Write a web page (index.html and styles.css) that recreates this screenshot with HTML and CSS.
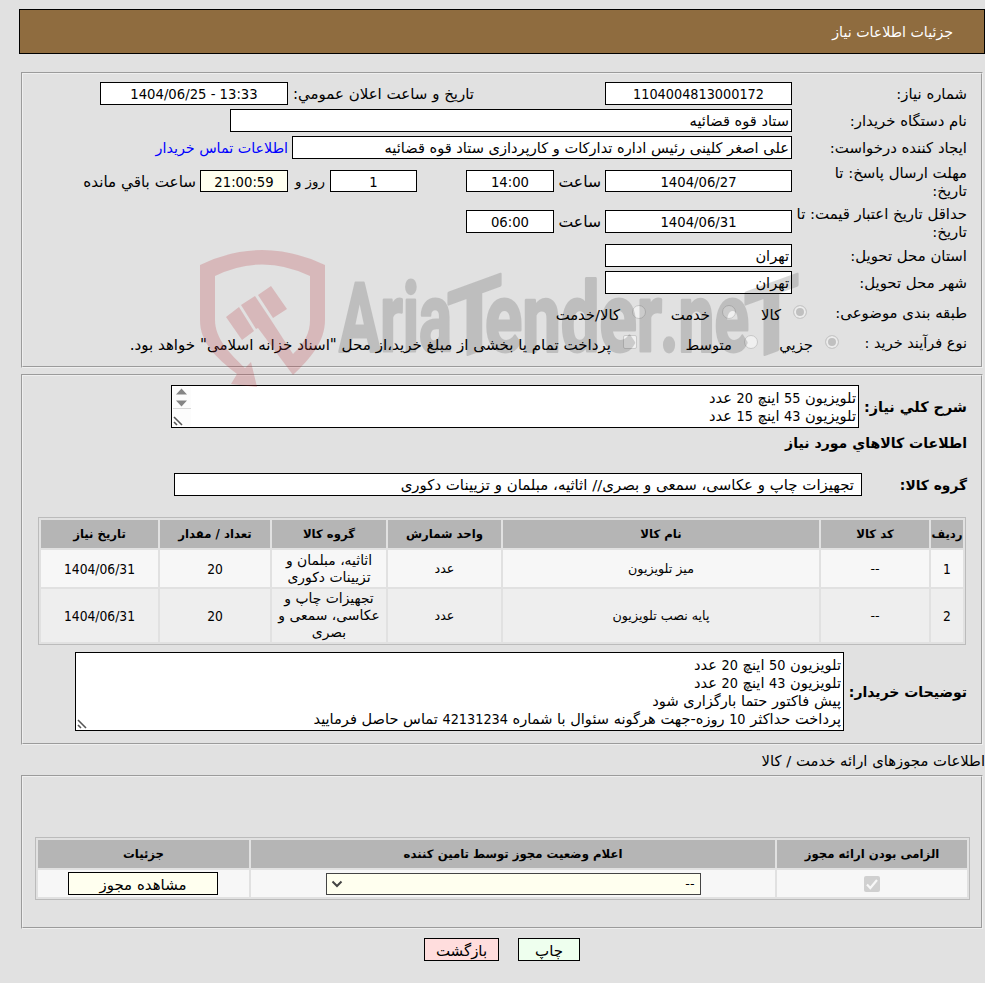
FILE: index.html
```html
<!DOCTYPE html>
<html lang="fa" dir="rtl">
<head>
<meta charset="UTF-8">
<title>جزئیات اطلاعات نیاز</title>
<link rel="stylesheet" href="styles.css">
</head>
<body>
    <header class="page-title">جزئیات اطلاعات نیاز</header>

    <section class="panel panel-info">
        <div class="row">
            <span class="label">شماره نیاز:</span>
            <span class="box w187 center need-number">1104004813000172</span>
            <span class="note note-date">تاریخ و ساعت اعلان عمومي:</span>
            <span class="box w188 center" dir="ltr">1404/06/25 - 13:33</span>
        </div>
        <div class="row">
            <span class="label">نام دستگاه خریدار:</span>
            <span class="box w562">ستاد قوه قضائیه</span>
        </div>
        <div class="row">
            <span class="label">ایجاد کننده درخواست:</span>
            <span class="box w500">علی اصغر کلینی رئیس اداره تدارکات و کارپردازی ستاد قوه قضائیه</span>
            <a class="contact">اطلاعات تماس خریدار</a>
        </div>
        <div class="row row-reply">
            <span class="label">مهلت ارسال پاسخ: تا<br>تاریخ:</span>
            <span class="box w187 center">1404/06/27</span>
            <span class="note note-hour">ساعت</span>
            <span class="box w88 center">14:00</span>
            <span class="box w87 center days">1</span>
            <span class="note note-day">روز و</span>
            <span class="box w88 center timer">21:00:59</span>
            <span class="note note-left">ساعت باقي مانده</span>
        </div>
        <div class="row row-valid">
            <span class="label">حداقل تاریخ اعتبار قیمت: تا<br>تاریخ:</span>
            <span class="box w187 center">1404/06/31</span>
            <span class="note note-hour">ساعت</span>
            <span class="box w88 center">06:00</span>
        </div>
        <div class="row">
            <span class="label">استان محل تحویل:</span>
            <span class="box w187">تهران</span>
        </div>
        <div class="row">
            <span class="label">شهر محل تحویل:</span>
            <span class="box w187">تهران</span>
        </div>
        <div class="row row-options">
            <span class="label label-options">طبقه بندی موضوعی:</span>
            <i class="radio on"></i><span class="opt opt-goods">کالا</span>
            <i class="radio"></i><span class="opt opt-service">خدمت</span>
            <i class="radio"></i><span class="opt opt-both">کالا/خدمت</span>
        </div>
        <div class="row row-options">
            <span class="label label-process">نوع فرآیند خرید :</span>
            <i class="radio on"></i><span class="opt opt-minor">جزيي</span>
            <i class="radio"></i><span class="opt opt-medium">متوسط</span>
            <i class="check"></i><span class="opt opt-pay">پرداخت تمام یا بخشی از مبلغ خرید،از محل "اسناد خزانه اسلامی" خواهد بود.</span>
        </div>
    </section>

    <section class="panel panel-goods">
        <div class="row row-summary">
            <span class="heading">شرح کلي نیاز:</span>
            <div class="area area-summary">تلویزیون <span class="num">55</span> اینچ <span class="num">20</span> عدد<br>تلویزیون <span class="num">43</span> اینچ <span class="num">15</span> عدد
                <svg class="spinner" width="18" height="39" viewBox="0 0 18 39"><path d="M0 0h18v39H0z" fill="#fcfcfc"/><path d="M0 21.500h18" stroke="#d8d8d8"/><path d="M3 7.500l5.500-6 5.500 6zM3 13.500h11l-5.500 6z" fill="#858585"/></svg>
                <svg class="grip" width="11" height="10" viewBox="0 0 11 10"><path d="M1 1l8 8M1 6l3 3" stroke="#555" stroke-width="1.600" fill="none"/></svg>
            </div>
        </div>
        <h2 class="heading goods-title">اطلاعات کالاهاي مورد نیاز</h2>
        <div class="row row-group">
            <span class="heading">گروه کالا:</span>
            <span class="box box-group">تجهیزات چاپ و عکاسی، سمعی و بصری// اثاثیه، مبلمان و تزیینات دکوری</span>
        </div>
        <table class="grid grid-goods">
            <colgroup><col class="c-row"><col class="c-code"><col class="c-name"><col class="c-unit"><col class="c-group"><col class="c-count"><col class="c-date"></colgroup>
            <tr><th>ردیف</th><th>کد کالا</th><th>نام کالا</th><th>واحد شمارش</th><th>گروه کالا</th><th>تعداد / مقدار</th><th>تاریخ نیاز</th></tr>
            <tr class="first"><td class="figure">1</td><td>--</td><td>میز تلویزیون</td><td>عدد</td><td class="group">اثاثیه، مبلمان و<br>تزیینات دکوری</td><td class="figure">20</td><td class="figure">1404/06/31</td></tr>
            <tr class="second"><td class="figure">2</td><td>--</td><td>پایه نصب تلویزیون</td><td>عدد</td><td class="group">تجهیزات چاپ و<br>عکاسی، سمعی و<br>بصری</td><td class="figure">20</td><td class="figure">1404/06/31</td></tr>
        </table>
        <div class="row row-notes">
            <span class="heading">توضیحات خریدار:</span>
            <div class="area area-notes">تلویزیون <span class="num">50</span> اینچ <span class="num">20</span> عدد<br>تلویزیون <span class="num">43</span> اینچ <span class="num">20</span> عدد<br>پیش فاکتور حتما بارگزاری شود<br>پرداخت حداکثر <span class="num">10</span> روزه-جهت هرگونه سئوال با شماره <span class="num">42131234</span> تماس حاصل فرمایید
                <svg class="grip" width="11" height="10" viewBox="0 0 11 10"><path d="M1 1l8 8M1 6l3 3" stroke="#555" stroke-width="1.600" fill="none"/></svg>
            </div>
        </div>
    </section>

    <div class="permits-title"><span>اطلاعات مجوزهای ارائه خدمت / کالا</span></div>

    <section class="panel panel-permits">
        <table class="grid grid-permits">
            <colgroup><col class="c-required"><col class="c-state"><col class="c-detail"></colgroup>
            <tr><th>الزامی بودن ارائه مجوز</th><th>اعلام وضعیت مجوز توسط تامین کننده</th><th>جزئیات</th></tr>
            <tr class="permit">
                <td><svg class="ticked" width="16" height="16" viewBox="0 0 16 16"><rect width="16" height="16" rx="2" fill="#d0d0d0"/><path d="M3 8.500l3.300 3.500L13 4" fill="none" stroke="#f7f7f7" stroke-width="2.200"/></svg></td>
                <td><div class="select"><span>--</span><svg width="12" height="8" viewBox="0 0 12 8"><path d="M1.500 1.500L6 6l4.500-4.500" fill="none" stroke="#444" stroke-width="2"/></svg></div></td>
                <td><button class="btn btn-view">مشاهده مجوز</button></td>
            </tr>
        </table>
    </section>

    <footer class="actions">
        <button class="btn btn-print">چاپ</button>
        <button class="btn btn-back">بازگشت</button>
    </footer>

    <svg class="watermark" width="620" height="150" viewBox="190 240 620 150">
        <g fill="#b52b34" fill-opacity=".22">
            <path d="M200 265Q262 235 325 265V320C325 342 310 359 293 375L258 328 256 329 241 305 255 296 271 320 293 354C305 342 310 333 310 320V276Q262 253 215 276V320C215 338 229 353 245 368L251 362 257 387 231 384 237 374C215 357 200 342 200 320Z"/>
            <path d="M226 317L239 307 254 331 242 340ZM258 295L271 286 287 309 273 318Z"/>
        </g>
        <g class="brand">
            <text x="339" y="351" textLength="113" lengthAdjust="spacingAndGlyphs">Aria</text>
            <text transform="translate(447 362) skewY(-20)" textLength="55" lengthAdjust="spacingAndGlyphs">T</text>
            <text x="485" y="351" textLength="177" lengthAdjust="spacingAndGlyphs">ender</text>
            <text x="660" y="351" textLength="89" lengthAdjust="spacingAndGlyphs">.ne</text>
            <text transform="translate(744 362) skewY(-20)" textLength="55" lengthAdjust="spacingAndGlyphs">T</text>
        </g>
    </svg>
</body>
</html>
```
FILE: styles.css
```css
* {
    box-sizing: border-box;
}
body {
    margin: 0;
    padding: 9px 0 0;
    height: 983px;
    position: relative;
    overflow: hidden;
    background: #e1e1e1;
    color: #000;
    font-family: "DejaVu Sans", sans-serif;
    font-size: 14.8px;
    line-height: 18px;
}
.page-title {
    height: 45px;
    margin-left: 19px;
    padding: 13px 31px 0 0;
    border: 1px solid #000;
    background: #8f6c3f;
    color: #fff;
    font-size: 14.2px;
}
.panel {
    margin: 0 2px 0 21px;
    padding: 8px 14px 0;
    border: 2px groove #efefef;
}
.panel-info {
    margin-top: 18px;
    height: 296px;
}
.panel-goods {
    margin-top: 6px;
    padding-top: 9px;
    height: 371px;
}
.row {
    display: flex;
    align-items: center;
    height: 23px;
    margin-bottom: 4px;
    white-space: nowrap;
}
.label {
    width: 175px;
    flex: none;
    font-size: 14.9px;
}
.box {
    flex: none;
    height: 23px;
    padding: 2px 2px 0;
    border: 1px solid #000;
    background: #fff;
    font-size: 14.6px;
}
.center,
.num,
.figure {
    font-family: "DejaVu Sans Condensed", "DejaVu Sans", sans-serif;
    font-size: 14.3px;
}
.center {
    font-size: 14.7px;
    text-align: center;
}
.need-number {
    font-size: 14.3px;
}
.w87 { width: 87px; }
.w88 { width: 88px; }
.w187 { width: 187px; }
.w188 { width: 188px; }
.w500 { width: 500px; }
.w562 { width: 562px; }
.note {
    flex: none;
}
.note-date {
    width: 186px;
    margin-right: 131px;
    font-size: 15px;
}
.contact {
    margin-right: 4px;
    color: #00f;
    font-size: 14.3px;
}
.row-reply {
    height: 36px;
}
.row-reply .box {
    height: 22px;
}
.row-valid {
    height: 37px;
}
.row-reply .label,
.row-valid .label {
    padding-top: 2px;
}
.note-hour {
    width: 47px;
    margin-right: 4px;
    padding-top: 1px;
    font-size: 15.6px;
}
.days {
    margin-right: 49px;
}
.note-day {
    width: 37px;
    margin-right: 5px;
    padding-top: 1px;
    font-size: 13.4px;
}
.timer {
    background: #ffffef;
}
.note-left {
    margin-right: 4px;
    padding-top: 1px;
    font-size: 15.2px;
}
.row-options {
    height: 30px;
    margin: 0;
}
.label-options {
    width: 160px;
}
.label-process {
    width: 128px;
    font-size: 14.5px;
}
.radio,
.check {
    flex: none;
    width: 14px;
    height: 14px;
    margin-bottom: 3px;
    border: 1px solid #c8c8c8;
    border-radius: 50%;
    background: #f0f0f0;
}
.radio.on {
    background: #c0c0c0;
    box-shadow: inset 0 0 0 2px #ececec;
}
.check {
    border-radius: 2px;
}
.opt {
    flex: none;
    padding: 3px 12px 0 0;
}
.opt-goods { width: 57px; }
.opt-service { width: 76px; }
.opt-minor { width: 67px; }
.opt-medium { width: 107px; }
.opt-pay {
    font-size: 15.1px;
}
.heading {
    margin: 0;
    font-size: 14.1px;
    font-weight: bold;
}
.row-summary {
    height: 43px;
    margin: 0;
}
.row-summary .heading {
    width: 108px;
    font-size: 14.4px;
}
.area {
    position: relative;
    flex: none;
    padding: 3px 2px 0;
    border: 1px solid #000;
    background: #fff;
    font-size: 14.6px;
}
.area-summary {
    width: 688px;
    height: 43px;
}
.spinner {
    position: absolute;
    left: 1px;
    top: 1px;
}
.grip {
    position: absolute;
    left: 1px;
    bottom: 1px;
}
.goods-title {
    margin-top: 5px;
    line-height: 20px;
}
.row-group {
    margin: 20px 0 21px;
}
.row-group .heading {
    width: 105px;
    font-size: 13.8px;
}
.box-group {
    width: 688px;
    padding-right: 7px;
    font-size: 14.95px;
}
.grid {
    table-layout: fixed;
    border: 1px solid #bbb;
    border-collapse: separate;
    border-spacing: 2px;
    font-size: 12.7px;
    line-height: 17px;
    text-align: center;
}
.grid th,
.grid td {
    padding: 0;
    white-space: nowrap;
}
.grid th {
    height: 28px;
    background: #b5b5b5;
    font-size: 11.7px;
}
.grid td {
    background: #f7f7f7;
}
.grid .group {
    font-size: 13.9px;
}
.grid .figure {
    padding-top: 1px;
    font-size: 13.7px;
}
.grid-goods {
    width: 928px;
    margin-right: 1px;
}
.c-row { width: 32px; }
.c-code { width: 108px; }
.c-name { width: 316px; }
.c-unit { width: 113px; }
.c-group { width: 114px; }
.c-count { width: 110px; }
.first td {
    height: 37px;
}
.grid .second td {
    height: 53px;
    background: #eee;
}
.row-notes {
    height: 79px;
    margin-top: 7px;
}
.row-notes .heading {
    width: 123px;
    font-size: 14px;
}
.area-notes {
    width: 769px;
    height: 79px;
}
.permits-title {
    height: 30px;
    padding-top: 7px;
}
.panel-permits {
    height: 154px;
    padding: 60px 11px 0;
}
.grid-permits {
    width: 935px;
}
.c-required { width: 190px; }
.c-state { width: 524px; }
.permit td {
    height: 27px;
}
.ticked {
    display: block;
    margin: auto;
}
.select {
    display: flex;
    align-items: center;
    justify-content: space-between;
    width: 375px;
    height: 22px;
    margin: auto;
    padding: 0 5px 0 4px;
    border: 1px solid #444;
    background: #ffffef;
}
.btn {
    height: 23px;
    padding: 2px 0 0;
    border: 1px solid #000;
    font: inherit;
    font-size: 15px;
    line-height: 18px;
    color: #000;
}
.btn-view {
    display: block;
    width: 150px;
    margin: 0 31px 0 0;
    background: #ffffef;
}
.actions {
    display: flex;
    gap: 19px;
    padding: 9px 405px 0 0;
}
.btn-print {
    width: 62px;
    background: #efe;
}
.btn-back {
    width: 75px;
    background: #fdd;
}
.watermark {
    position: absolute;
    left: 190px;
    top: 240px;
    direction: ltr;
    pointer-events: none;
}
.brand {
    opacity: .15;
}
.brand text {
    font-family: Roboto, sans-serif;
    font-size: 96px;
    font-weight: bold;
    stroke: #000;
    stroke-width: 3;
    stroke-linejoin: round;
}
```
